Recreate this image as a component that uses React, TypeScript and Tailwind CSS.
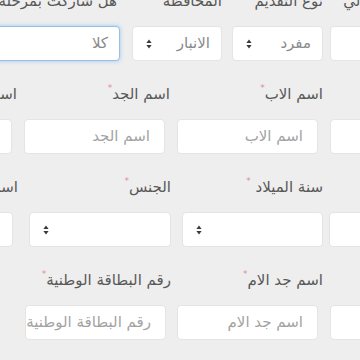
import React from "react";

const FONT = { fontFamily: '"DejaVu Sans", "Noto Sans", sans-serif' };

function Arrows() {
  return (
    <svg width="6" height="10" viewBox="0 0 6 10" className="shrink-0">
      <path d="M3 0.5 L5.6 4 H0.4 Z" fill="#3a3a3a" />
      <path d="M3 9.5 L5.6 6 H0.4 Z" fill="#3a3a3a" />
    </svg>
  );
}

function Label({ text, req = true }: { text: string; req?: boolean }) {
  return (
    <div className="h-5 leading-5 text-[15px] text-[#585858] whitespace-nowrap mb-[15px]">
      {text}
      {req && <span className="text-[#e38aa0] text-[9px] align-top leading-none">*</span>}
    </div>
  );
}

function TextBox({ placeholder, w = "w-[141px]" }: { placeholder: string; w?: string }) {
  return (
    <div className={`h-[35px] ${w} self-end bg-white rounded border border-[#e4e4e4] pr-[14px] pl-[7px] flex items-center overflow-hidden`}>
      <span className="text-[15px] text-[#a3a3a3] whitespace-nowrap">{placeholder}</span>
    </div>
  );
}

function SelectBox({ value, w = "w-[141px]", focus = false }: { value?: string; w?: string; focus?: boolean }) {
  return (
    <div
      className={`h-[35px] ${w} self-end bg-white rounded flex items-center justify-between pr-[11px] pl-[13px] overflow-hidden ${
        focus ? "border border-[#93bfe8] shadow-[0_0_4px_rgba(102,175,233,0.6)]" : "border border-[#e4e4e4]"
      }`}
    >
      <span className="text-[15px] text-[#8a8a8a] whitespace-nowrap">{value ?? ""}</span>
      <Arrows />
    </div>
  );
}

export default function App() {
  return (
    <div dir="rtl" className="w-[360px] h-[360px] overflow-hidden bg-[#eeeeee]" style={FONT}>
      <div className="flex flex-col gap-[23px] -mt-[9px]">
        {/* row 1 */}
        <div className="flex -mr-[61px]">
          <div className="w-[91px] shrink-0 flex flex-col">
            <Label text="العمر الحالي" req={false} />
            <TextBox placeholder="" w="w-[91px]" />
          </div>
          <div className="w-[91px] shrink-0 flex flex-col mr-[7px]">
            <Label text="نوع التقديم" req={false} />
            <SelectBox value="مفرد" w="w-[91px]" />
          </div>
          <div className="w-[90px] shrink-0 flex flex-col mr-[10px]">
            <Label text="المحافظة" req={false} />
            <SelectBox value="الانبار" w="w-[90px]" />
          </div>
          <div className="w-[140px] shrink-0 flex flex-col mr-[12px]">
            <div className="pr-[3px]">
              <Label text="هل شاركت بمرحلة سابقة" req={false} />
            </div>
            <SelectBox value="كلا" w="w-[140px]" focus />
          </div>
        </div>

        {/* row 2 */}
        <div className="flex -mr-[116px]">
          <div className="w-[146px] shrink-0 flex flex-col">
            <Label text="الاسم الاول" />
            <TextBox placeholder="الاسم الاول" />
          </div>
          <div className="w-[146px] shrink-0 flex flex-col mr-[7px]">
            <Label text="اسم الاب" />
            <TextBox placeholder="اسم الاب" />
          </div>
          <div className="w-[146px] shrink-0 flex flex-col mr-[7px]">
            <Label text="اسم الجد" />
            <TextBox placeholder="اسم الجد" />
          </div>
          <div className="w-[146px] shrink-0 flex flex-col mr-[7px]">
            <Label text="اسم اللقب" />
            <TextBox placeholder="اسم اللقب" />
          </div>
        </div>

        {/* row 3 */}
        <div className="flex -mr-[110px]">
          <div className="w-[141px] shrink-0 flex flex-col">
            <Label text="اسم الام" />
            <TextBox placeholder="" />
          </div>
          <div className="w-[141px] shrink-0 flex flex-col mr-[6px]">
            <Label text="سنة الميلاد " />
            <SelectBox />
          </div>
          <div className="w-[142px] shrink-0 flex flex-col mr-[11px]">
            <Label text="الجنس" />
            <SelectBox w="w-[142px]" />
          </div>
          <div className="w-[146px] shrink-0 flex flex-col mr-[11px]">
            <Label text="اسم ابو الام" />
            <TextBox placeholder="اسم ابو الام" />
          </div>
        </div>

        {/* row 4 */}
        <div className="flex -mr-[116px]">
          <div className="w-[146px] shrink-0 flex flex-col">
            <Label text="اسم ام الام" />
            <TextBox placeholder="اسم ام الام" />
          </div>
          <div className="w-[146px] shrink-0 flex flex-col mr-[7px]">
            <Label text="اسم جد الام" />
            <TextBox placeholder="اسم جد الام" />
          </div>
          <div className="w-[146px] shrink-0 flex flex-col mr-[6px]">
            <Label text="رقم البطاقة الوطنية" />
            <TextBox placeholder="رقم البطاقة الوطنية" />
          </div>
        </div>
      </div>
    </div>
  );
}
